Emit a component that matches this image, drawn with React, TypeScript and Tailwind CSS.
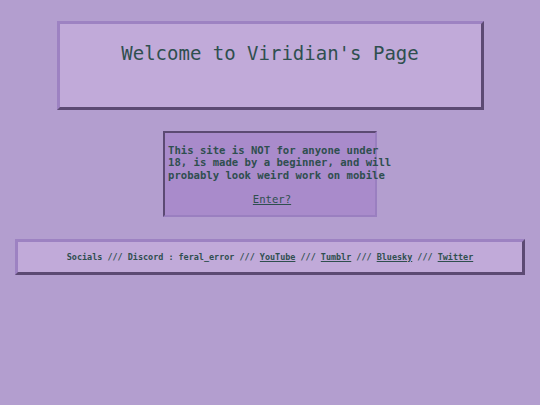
import React from 'react';

export default function App() {
  const mono = { fontFamily: '"DejaVu Sans Mono", monospace' };

  return (
    <div className="min-h-[405px] w-full bg-[#b39ecf] flex flex-col items-center pt-[21px] text-[#2f4f4f]" style={mono}>
      {/* Header */}
      <div className="w-[427px] h-[89px] bg-[#c1aad9] border-[3px] border-t-[#9d82c2] border-l-[#9d82c2] border-b-[#5c4a73] border-r-[#5c4a73] flex justify-center pt-[18px]">
        <h1 className="text-[19px] leading-[22px] font-normal">Welcome to Viridian's Page</h1>
      </div>

      {/* Warning */}
      <div className="mt-[21px] w-[214px] h-[86px] bg-[#a98bcb] border-[2px] border-t-[#5c4a73] border-l-[#5c4a73] border-b-[#9a7fc0] border-r-[#9a7fc0] px-[3px] pt-[11px]">
        <p className="text-[10.6px] leading-[12.4px] font-bold whitespace-nowrap">
          This site is NOT for anyone under<br />
          18, is made by a beginner, and will<br />
          probably look weird work on mobile
        </p>
        <p className="text-[10.6px] leading-[12.4px] mt-[11.5px] pl-[4px] text-center">
          <a href="#" className="underline">Enter?</a>
        </p>
      </div>

      {/* Footer */}
      <div className="mt-[22px] w-[510px] h-[36px] bg-[#c1aad9] border-[3px] border-t-[#9d82c2] border-l-[#9d82c2] border-b-[#5c4a73] border-r-[#5c4a73] flex items-center justify-center">
        <p className="text-[8.45px] font-bold whitespace-nowrap">
          Socials /// Discord : feral_error /// <a href="#" className="underline">YouTube</a> /// <a href="#" className="underline">Tumblr</a> /// <a href="#" className="underline">Bluesky</a> /// <a href="#" className="underline">Twitter</a>
        </p>
      </div>
    </div>
  );
}
